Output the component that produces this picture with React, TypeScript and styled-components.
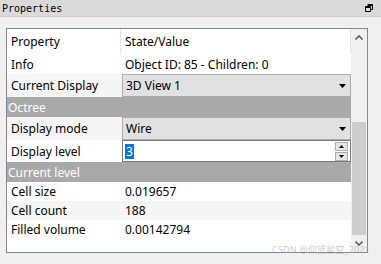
import styled, { createGlobalStyle } from 'styled-components'

const GlobalStyle = createGlobalStyle`
    html, body {
        margin: 0;
        padding: 0;
        background: #f0f0f0;
        width: 381px;
        height: 264px;
        overflow: hidden;
    }
`

interface RowI {
    height: number
    shaded?: boolean
}

const Window = styled.div`
    width: 381px;
    height: 264px;
    background: #f0f0f0;
    display: flex;
    flex-direction: column;
    font-family: 'Noto Sans', 'Noto Sans CJK SC', sans-serif;
`

const TitleBar = styled.div`
    height: 16px;
    background: #dadada;
    border-bottom: 1px solid #c8c8c8;
    display: flex;
    align-items: center;
    justify-content: space-between;
    padding: 0 8px 0 2px;
`

const TitleText = styled.span`
    font-family: 'DejaVu Sans Mono', 'Liberation Mono', monospace;
    font-size: 10px;
    color: #000;
`

const Body = styled.div`
    padding: 11px 13px 0 6px;
`

const Frame = styled.div`
    height: 223px;
    border: 1px solid #828790;
    background: #fff;
    display: flex;
`

const Table = styled.div`
    flex: 1;
    display: flex;
    flex-direction: column;
`

const Row = styled.div<RowI>`
    height: ${p => p.height}px;
    display: grid;
    grid-template-columns: 114px 1fr;
    background: ${p => p.shaded ? '#f5f5f5' : '#fff'};
    font-size: 12px;
    color: #000;
`

const Cell = styled.div`
    display: flex;
    align-items: center;
    padding-left: 4px;
    white-space: nowrap;
`

const HeaderCell = styled(Cell)`
    border-right: 1px solid #e5e5e5;
`

const GroupRow = styled.div`
    height: 20px;
    background: #a9a9a9;
    color: #fff;
    font-size: 12px;
    display: flex;
    align-items: center;
    padding-left: 1px;
`

const Combo = styled.div`
    flex: 1;
    align-self: stretch;
    margin-left: 1px;
    background: #e1e1e1;
    border: 1px solid #adadad;
    display: flex;
    align-items: center;
    justify-content: space-between;
    padding: 0 4px 0 3px;
`

const Spin = styled.div`
    flex: 1;
    align-self: stretch;
    margin-left: 1px;
    background: #fff;
    border: 1px solid #7a7a7a;
    display: flex;
    align-items: center;
    justify-content: space-between;
    padding: 0 2px 0 2px;
`

const Selected = styled.span`
    background: #0078d7;
    color: #fff;
    line-height: 15px;
    padding: 0 1px;
`

const SpinButtons = styled.div`
    display: flex;
    flex-direction: column;
    gap: 1px;
`

const SpinButton = styled.div`
    width: 11px;
    height: 7px;
    border: 1px solid #adadad;
    background: #e5e5e5;
    display: flex;
    align-items: center;
    justify-content: center;
`

const EditorCell = styled.div`
    display: flex;
    align-items: stretch;
`

const ScrollBar = styled.div`
    width: 16px;
    background: #f0f0f0;
    display: flex;
    flex-direction: column;
    align-items: center;
`

const ScrollArrow = styled.div`
    height: 17px;
    width: 16px;
    display: flex;
    align-items: center;
    justify-content: center;
`

const Track = styled.div`
    flex: 1;
    width: 100%;
    display: flex;
    flex-direction: column;
    justify-content: flex-end;
`

const Thumb = styled.div`
    height: 113px;
    margin: 0 1px;
    background: #cdcdcd;
`

const Watermark = styled.div`
    position: absolute;
    left: 272px;
    top: 243px;
    font-size: 9px;
    color: rgba(150, 150, 150, 0.5);
    font-family: 'Noto Sans', 'Noto Sans CJK SC', sans-serif;
    letter-spacing: 0.2px;
`

const Arrow = () => (
    <svg width="7" height="4" viewBox="0 0 7 4">
        <path d="M0 0H7L3.5 4Z" fill="#000" />
    </svg>
)

const SmallArrow = ({ up }: { up?: boolean }) => (
    <svg width="5" height="3" viewBox="0 0 5 3">
        <path d={up ? 'M0 3H5L2.5 0Z' : 'M0 0H5L2.5 3Z'} fill="#000" />
    </svg>
)

const Chevron = ({ up }: { up?: boolean }) => (
    <svg width="8" height="5" viewBox="0 0 8 5">
        <path d={up ? 'M0.5 4.5L4 1L7.5 4.5' : 'M0.5 0.5L4 4L7.5 0.5'} stroke="#606060" strokeWidth="1.6" fill="none" />
    </svg>
)

const FloatIcon = () => (
    <svg width="8" height="8" viewBox="0 0 8 8">
        <path d="M2.5 0.5H7.5V5.5H5.5M0.5 2.5H5.5V7.5H0.5Z M0.5 3.5H5.5 M2.5 1.5H7.5" stroke="#000" strokeWidth="1" fill="none" />
    </svg>
)

const values = [
    { name: 'Cell size', value: '0.019657', shaded: false },
    { name: 'Cell count', value: '188', shaded: true },
    { name: 'Filled volume', value: '0.00142794', shaded: false },
]

export default function App() {
    return (
        <Window>
            <GlobalStyle />
            <TitleBar>
                <TitleText>Properties</TitleText>
                <FloatIcon />
            </TitleBar>
            <Body>
                <Frame>
                    <Table>
                        <Row height={25}>
                            <HeaderCell>Property</HeaderCell>
                            <HeaderCell>State/Value</HeaderCell>
                        </Row>
                        <Row height={20}>
                            <Cell>Info</Cell>
                            <Cell>Object ID: 85 - Children: 0</Cell>
                        </Row>
                        <Row height={23} shaded>
                            <Cell>Current Display</Cell>
                            <EditorCell>
                                <Combo>3D View 1<Arrow /></Combo>
                            </EditorCell>
                        </Row>
                        <GroupRow>Octree</GroupRow>
                        <Row height={23} shaded>
                            <Cell>Display mode</Cell>
                            <EditorCell>
                                <Combo>Wire<Arrow /></Combo>
                            </EditorCell>
                        </Row>
                        <Row height={22}>
                            <Cell>Display level</Cell>
                            <EditorCell>
                                <Spin>
                                    <Selected>3</Selected>
                                    <SpinButtons>
                                        <SpinButton><SmallArrow up /></SpinButton>
                                        <SpinButton><SmallArrow /></SpinButton>
                                    </SpinButtons>
                                </Spin>
                            </EditorCell>
                        </Row>
                        <GroupRow>Current level</GroupRow>
                        {values.map(v => (
                            <Row key={v.name} height={19} shaded={v.shaded}>
                                <Cell>{v.name}</Cell>
                                <Cell>{v.value}</Cell>
                            </Row>
                        ))}
                    </Table>
                    <ScrollBar>
                        <ScrollArrow><Chevron up /></ScrollArrow>
                        <Track>
                            <Thumb />
                        </Track>
                        <ScrollArrow><Chevron /></ScrollArrow>
                    </ScrollBar>
                </Frame>
            </Body>
            <Watermark>CSDN @仰望星空_2021</Watermark>
        </Window>
    )
}
